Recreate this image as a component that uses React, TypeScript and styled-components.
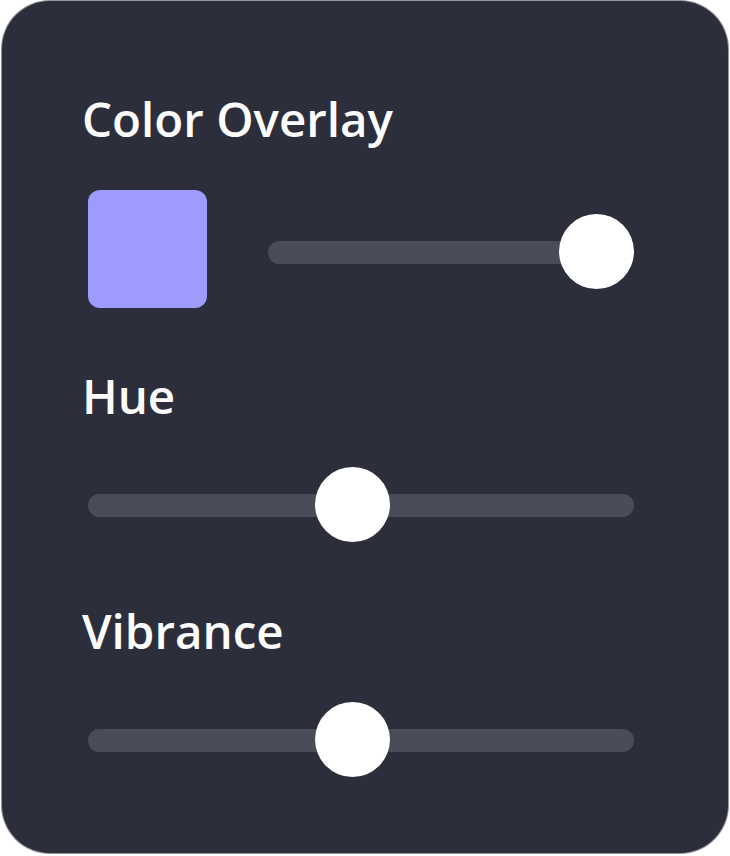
import React from "react";
import styled, { createGlobalStyle } from "styled-components";

const THUMB = 75;

const GlobalStyle = createGlobalStyle`
  html, body {
    margin: 0;
    padding: 0;
    background: #ffffff;
  }
  body {
    font-family: "Open Sans", "Noto Sans", sans-serif;
  }
`;

function Slider({ value, shift = 0 }: { value: number; shift?: number }) {
  return (
    <SliderWrap shift={shift}>
      <Track />
      <Thumb style={{ left: `calc((100% - ${THUMB}px) * ${value})` }} />
    </SliderWrap>
  );
}

export default function App() {
  return (
    <>
      <GlobalStyle />
      <Card>
        <Section>
          <Label>Color Overlay</Label>
          <Row>
            <Swatch color="#9e9bfc" />
            <Slider value={1} shift={3} />
          </Row>
        </Section>
        <Section>
          <Label>Hue</Label>
          <Slider value={0.482} />
        </Section>
        <Section>
          <Label>Vibrance</Label>
          <Slider value={0.482} />
        </Section>
      </Card>
    </>
  );
}

const Card = styled.div`
  box-sizing: border-box;
  width: 726px;
  height: 852px;
  margin: 1px 2px 2px 2px;
  padding: 90px 94px 0 86px;
  background: #2c2f3b;
  border-radius: 48px;
  box-shadow: 0 0 0 1px rgba(60, 62, 72, 0.55);
  display: flex;
  flex-direction: column;
  gap: 60px;
`;

const Section = styled.div`
  display: flex;
  flex-direction: column;
  gap: 43px;
`;

const Label = styled.div`
  margin-left: -6px;
  font-size: 47.5px;
  line-height: 56px;
  font-weight: 600;
  color: #fbfbfc;
`;

const Row = styled.div`
  display: flex;
  align-items: center;
  gap: 61px;
`;

const Swatch = styled.div<{ color: string }>`
  flex: none;
  width: 119px;
  height: 118px;
  border-radius: 12px;
  background: ${({ color }) => color};
`;

const SliderWrap = styled.div<{ shift: number }>`
  position: relative;
  flex-grow: 1;
  min-width: 0;
  height: ${THUMB + 1}px;
  margin-top: ${({ shift }) => shift * 2}px;
  display: flex;
  align-items: center;
`;

const Track = styled.div`
  width: 100%;
  height: 23px;
  border-radius: 12px;
  background: #4a4c58;
`;

const Thumb = styled.div`
  position: absolute;
  top: 0;
  width: ${THUMB}px;
  height: ${THUMB}px;
  border-radius: 50%;
  background: #ffffff;
`;
